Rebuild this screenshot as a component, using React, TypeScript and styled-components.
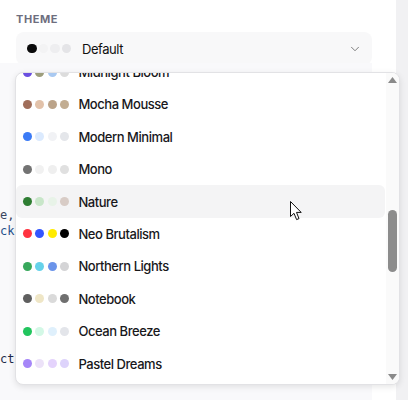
import styled, { createGlobalStyle } from 'styled-components'
import { ChevronDown } from 'lucide-react'

type Theme = { name: string; colors: string[] }

const themes: Theme[] = [
  { name: 'Midnight Bloom', colors: ['#6a4fe0', '#9d9e7c', '#a9c9f1', '#dcdcdc'] },
  { name: 'Mocha Mousse', colors: ['#a06e5a', '#e2c2aa', '#bba389', '#c2ad92'] },
  { name: 'Modern Minimal', colors: ['#3b7bf6', '#dbeafe', '#f1f2f5', '#e4e6ea'] },
  { name: 'Mono', colors: ['#737373', '#f1f1f1', '#efefef', '#e0e0e0'] },
  { name: 'Nature', colors: ['#2e7d32', '#c8e6c9', '#e8f3e8', '#d8ccc6'] },
  { name: 'Neo Brutalism', colors: ['#ff3340', '#3356ff', '#ffeb00', '#000000'] },
  { name: 'Northern Lights', colors: ['#38a85c', '#66d2ea', '#6b94ea', '#d4d4d6'] },
  { name: 'Notebook', colors: ['#5f5f5f', '#efe6c6', '#dadada', '#6f6f6f'] },
  { name: 'Ocean Breeze', colors: ['#22c55e', '#d3f8e6', '#dff0fc', '#e3e5ea'] },
  { name: 'Pastel Dreams', colors: ['#a686f8', '#ece2f8', '#e4d3fc', '#ddd3fb'] },
]

const defaultColors = ['#0b0b0b', '#f3f3f4', '#eeeef0', '#e4e4e7']

// fragments of the code sample that peek out left of the open menu
const codeLines: { text: string; color?: string }[] = [
  ...Array.from({ length: 9 }, () => ({ text: '' })),
  { text: 'e,', color: '#3a4660' },
  { text: 'cke', color: '#1f4f8a' },
  ...Array.from({ length: 7 }, () => ({ text: '' })),
  { text: 'cti', color: '#1e2a4a' },
]

const GlobalStyle = createGlobalStyle`
  body {
    margin: 0;
    background: #ffffff;
    font-family: Inter, "Liberation Sans", sans-serif;
  }
`

function Swatches({ colors, size = 9, gap = 3.3 }: { colors: string[]; size?: number; gap?: number }) {
  return (
    <DotRow $gap={gap}>
      {colors.map((c, i) => (
        <Dot key={i} $color={c} $size={size} />
      ))}
    </DotRow>
  )
}

export default function App() {
  return (
    <>
      <GlobalStyle />
      <Page>
        <Main>
          <Label>Theme</Label>
          <Trigger>
            <Swatches colors={defaultColors} size={9.5} gap={2} />
            <TriggerText>Default</TriggerText>
            <ChevronDown size={14} color="#6b6b6b" strokeWidth={1.5} />
          </Trigger>
          <CodeBlock>
            {codeLines.map((l, i) => (
              <CodeLine key={i} $color={l.color ?? '#24345a'}>
                {l.text || ' '}
              </CodeLine>
            ))}
          </CodeBlock>

          <Dropdown>
            <List>
              <ListInner>
                {themes.map((t) => (
                  <Item key={t.name} $active={t.name === 'Nature'}>
                    <Swatches colors={t.colors} />
                    <ItemText>{t.name}</ItemText>
                  </Item>
                ))}
              </ListInner>
            </List>
            <Scrollbar>
              <ScrollArrow>
                <svg width="9" height="6" viewBox="0 0 9 6">
                  <path d="M4.5 0 L9 6 L0 6 Z" fill="#8a8a8a" />
                </svg>
              </ScrollArrow>
              <Track>
                <Thumb />
              </Track>
              <ScrollArrow>
                <svg width="9" height="6" viewBox="0 0 9 6">
                  <path d="M0 0 L9 0 L4.5 6 Z" fill="#8a8a8a" />
                </svg>
              </ScrollArrow>
            </Scrollbar>
          </Dropdown>

          <Cursor width="13" height="20" viewBox="0 0 13 20">
            <path
              d="M0.5 0.5 L0.5 15.5 L4 12.3 L6.6 18.6 L9 17.6 L6.5 11.4 L11.2 11.4 Z"
              fill="#ffffff"
              stroke="#111111"
              strokeWidth="1"
              strokeLinejoin="round"
            />
          </Cursor>
        </Main>
        <PageScroll />
      </Page>
    </>
  )
}

const Page = styled.div`
  display: flex;
  height: 400px;
  overflow: hidden;
`

const Main = styled.div`
  position: relative;
  flex: 1;
  display: flex;
  flex-direction: column;
  padding: 12px 24px 0 0;
`

const PageScroll = styled.div`
  width: 12px;
  background: #f1f1f3;
`

const Label = styled.div`
  margin-left: 16px;
  font-size: 11px;
  line-height: 14px;
  font-weight: 700;
  letter-spacing: 0.05em;
  text-transform: uppercase;
  color: #6e6e7e;
`

const Trigger = styled.div`
  display: flex;
  align-items: center;
  height: 33px;
  margin: 6px 0 0 16px;
  padding: 0 10px 0 11px;
  background: #f8f8f9;
  border-radius: 8px;
  color: #111;
`

const TriggerText = styled.span`
  flex: 1;
  margin-left: 11px;
  font-size: 13px;
  letter-spacing: -0.45px;
  color: #111111;
`

const DotRow = styled.div<{ $gap: number }>`
  display: flex;
  gap: ${(p) => p.$gap}px;
`

const Dot = styled.span<{ $color: string; $size: number }>`
  display: block;
  width: ${(p) => p.$size}px;
  height: ${(p) => p.$size}px;
  border-radius: 50%;
  background: ${(p) => p.$color};
`

const CodeBlock = styled.div`
  margin-top: -2px;
  flex: 1;
  overflow: hidden;
  background: #f9f9fb;
  font-family: "DejaVu Sans Mono", monospace;
  font-size: 12px;
  line-height: 16px;
  white-space: pre;
`

const CodeLine = styled.div<{ $color: string }>`
  height: 16px;
  color: ${(p) => p.$color};
`

const Dropdown = styled.div`
  position: absolute;
  top: 72px;
  left: 15px;
  width: 385px;
  height: 313px;
  box-sizing: border-box;
  display: flex;
  background: #ffffff;
  border: 1px solid #e2e2e5;
  border-radius: 8px;
  box-shadow: 0 2px 6px rgba(0, 0, 0, 0.1);
  overflow: hidden;
`

const List = styled.div`
  flex: 1;
  overflow: hidden;
  padding-right: 1px;
`

const ListInner = styled.div`
  margin-top: -17.2px;
`

const Item = styled.div<{ $active?: boolean }>`
  display: flex;
  align-items: center;
  height: 32.4px;
  padding-left: 7px;
  border-radius: 6px;
  background: ${(p) => (p.$active ? '#f4f4f5' : 'transparent')};
`

const ItemText = styled.span`
  margin-left: 9.5px;
  font-size: 13px;
  font-weight: 500;
  letter-spacing: -0.45px;
  color: #18181b;
`

const Scrollbar = styled.div`
  width: 13px;
  display: flex;
  flex-direction: column;
  background: #fafafa;
`

const ScrollArrow = styled.div`
  height: 14px;
  display: flex;
  align-items: center;
  justify-content: center;
`

const Track = styled.div`
  flex: 1;
  display: flex;
  justify-content: center;
`

const Thumb = styled.div`
  width: 9px;
  height: 62px;
  margin-top: 123px;
  border-radius: 5px;
  background: #8c8c8c;
`

const Cursor = styled.svg`
  position: absolute;
  left: 290px;
  top: 201px;
`
